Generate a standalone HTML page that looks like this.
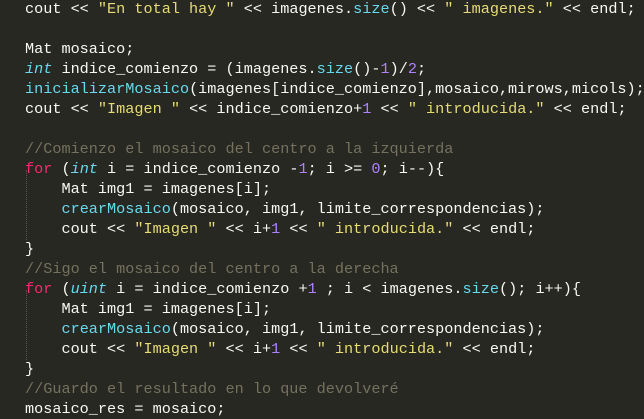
<!DOCTYPE html>
<html><head><meta charset="utf-8"><style>
html,body{margin:0;padding:0;background:#272822;width:644px;height:418px;overflow:hidden}
pre{margin:0;position:absolute;left:25px;top:-1px;font-family:"Liberation Mono",monospace;font-size:15.2px;line-height:20px;color:#f8f8f2;white-space:pre}
.s{color:#e6db74}.t{color:#66d9ef;font-style:italic}.f{color:#66d9ef}.k{color:#f92672}.n{color:#ae81ff}.c{color:#75715e}
.g{position:absolute;left:26px;border-left:1px dotted #555;width:0}
</style></head><body>
<div class="g" style="top:170px;height:70px"></div>
<div class="g" style="top:290px;height:70px"></div>
<pre>cout &lt;&lt; <span class="s">"En total hay "</span> &lt;&lt; imagenes.<span class="f">size</span>() &lt;&lt; <span class="s">" imagenes."</span> &lt;&lt; endl;

Mat mosaico;
<span class="t">int</span> indice_comienzo = (imagenes.<span class="f">size</span>()-<span class="n">1</span>)/<span class="n">2</span>;
<span class="f">inicializarMosaico</span>(imagenes[indice_comienzo],mosaico,mirows,micols);
cout &lt;&lt; <span class="s">"Imagen "</span> &lt;&lt; indice_comienzo+<span class="n">1</span> &lt;&lt; <span class="s">" introducida."</span> &lt;&lt; endl;

<span class="c">//Comienzo el mosaico del centro a la izquierda</span>
<span class="k">for</span> (<span class="t">int</span> i = indice_comienzo -<span class="n">1</span>; i &gt;= <span class="n">0</span>; i--){
    Mat img1 = imagenes[i];
    <span class="f">crearMosaico</span>(mosaico, img1, limite_correspondencias);
    cout &lt;&lt; <span class="s">"Imagen "</span> &lt;&lt; i+<span class="n">1</span> &lt;&lt; <span class="s">" introducida."</span> &lt;&lt; endl;
}
<span class="c">//Sigo el mosaico del centro a la derecha</span>
<span class="k">for</span> (<span class="t">uint</span> i = indice_comienzo +<span class="n">1</span> ; i &lt; imagenes.<span class="f">size</span>(); i++){
    Mat img1 = imagenes[i];
    <span class="f">crearMosaico</span>(mosaico, img1, limite_correspondencias);
    cout &lt;&lt; <span class="s">"Imagen "</span> &lt;&lt; i+<span class="n">1</span> &lt;&lt; <span class="s">" introducida."</span> &lt;&lt; endl;
}
<span class="c">//Guardo el resultado en lo que devolveré</span>
mosaico_res = mosaico;</pre>
</body></html>
